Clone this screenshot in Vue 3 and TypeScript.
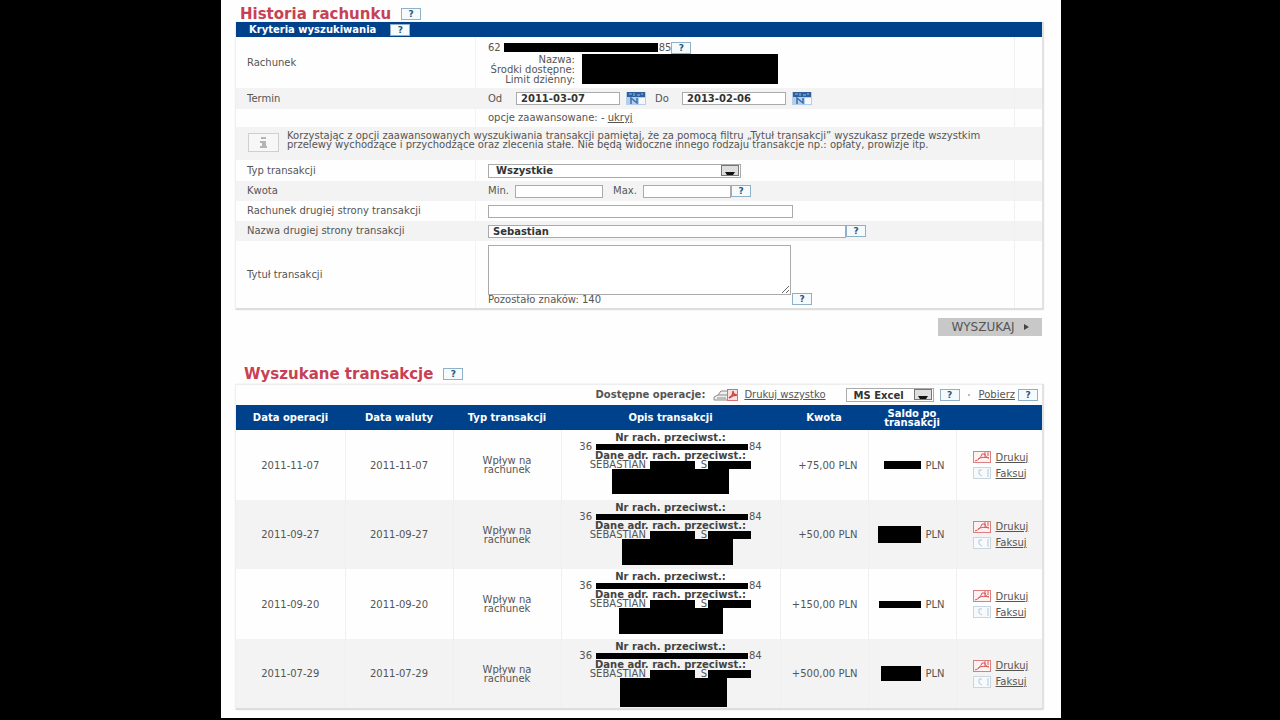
<script setup lang="ts">
import { ref } from 'vue'

interface Size {
  w: number
  h: number
}

interface Transaction {
  posted: string
  value: string
  amount: string
  address: Size & { indent: number }
  balance: Size
}

const from = ref('2011-03-07')
const to = ref('2013-02-06')
const type = ref('Wszystkie')
const min = ref('')
const max = ref('')
const account = ref('')
const name = ref('Sebastian')
const title = ref('')
const format = ref('MS Excel')

const transactions: Transaction[] = [
  { posted: '2011-11-07', value: '2011-11-07', amount: '+75,00 PLN', address: { w: 117, h: 25, indent: 0 }, balance: { w: 37, h: 8 } },
  { posted: '2011-09-27', value: '2011-09-27', amount: '+50,00 PLN', address: { w: 111, h: 26, indent: 14 }, balance: { w: 43, h: 17 } },
  { posted: '2011-09-20', value: '2011-09-20', amount: '+150,00 PLN', address: { w: 104, h: 26, indent: 0 }, balance: { w: 42, h: 7 } },
  { posted: '2011-07-29', value: '2011-07-29', amount: '+500,00 PLN', address: { w: 107, h: 29, indent: 6 }, balance: { w: 40, h: 15 } },
]

const box = (s: Size, indent = 0) => ({
  width: `${s.w}px`,
  height: `${s.h}px`,
  marginLeft: `${indent}px`,
})
</script>

<template>
  <main class="sheet">
    <header class="heading">
      <h1>Historia rachunku</h1>
      <button type="button" class="help" aria-label="Pomoc">?</button>
    </header>

    <form class="panel" @submit.prevent>
      <div class="bar">
        <h2>Kryteria wyszukiwania</h2>
        <button type="button" class="help" aria-label="Pomoc">?</button>
      </div>

      <div class="row account-row">
        <span class="label">Rachunek</span>
        <div class="field account">
          <div class="number">
            <span>62</span><i class="ink number-ink"></i><span>85</span>
            <button type="button" class="help" aria-label="Pomoc">?</button>
          </div>
          <div class="details">
            <div class="detail-labels">
              <span>Nazwa:</span>
              <span>Środki dostępne:</span>
              <span>Limit dzienny:</span>
            </div>
            <i class="ink details-ink"></i>
          </div>
        </div>
        <span class="edge"></span>
      </div>

      <div class="row alt term-row">
        <span class="label">Termin</span>
        <div class="field">
          <label class="lead" for="from">Od</label>
          <input id="from" v-model="from" class="date" type="text" />
          <button type="button" class="calendar" aria-label="Kalendarz">
            <svg width="20" height="13" viewBox="0 0 20 13">
              <rect x="0" y="0" width="20" height="13" fill="#b4cdea" />
              <rect x="1" y="0" width="18" height="5" fill="#2f5f9c" />
              <path d="M3 2h3M8 1v3M11 3h3M16 1v2" stroke="#9dbbdf" stroke-width="1" />
              <rect x="13" y="6" width="6" height="6" fill="#f4f8fc" />
              <path d="M5 12V6l6 5V6" fill="none" stroke="#3a70ad" stroke-width="1.5" />
            </svg>
          </button>
          <label class="lead to" for="to">Do</label>
          <input id="to" v-model="to" class="date" type="text" />
          <button type="button" class="calendar" aria-label="Kalendarz">
            <svg width="20" height="13" viewBox="0 0 20 13">
              <rect x="0" y="0" width="20" height="13" fill="#b4cdea" />
              <rect x="1" y="0" width="18" height="5" fill="#2f5f9c" />
              <path d="M3 2h3M8 1v3M11 3h3M16 1v2" stroke="#9dbbdf" stroke-width="1" />
              <rect x="13" y="6" width="6" height="6" fill="#f4f8fc" />
              <path d="M5 12V6l6 5V6" fill="none" stroke="#3a70ad" stroke-width="1.5" />
            </svg>
          </button>
        </div>
        <span class="edge"></span>
      </div>

      <div class="row advanced-row">
        <span class="label"></span>
        <div class="field">
          <span>opcje zaawansowane: - <a href="#">ukryj</a></span>
        </div>
        <span class="edge"></span>
      </div>

      <div class="note">
        <svg width="31" height="19" viewBox="0 0 31 19">
          <rect x="0.5" y="0.5" width="30" height="18" fill="#f7f7f7" stroke="#cfcfcf" />
          <path d="M13 4h5v2h-5zM12 8h6v5h1v2h-7v-2h2v-3h-2z" fill="#b4b4b4" />
        </svg>
        <p>
          Korzystając z opcji zaawansowanych wyszukiwania transakcji pamiętaj, że za pomocą filtru „Tytuł transakcji” wyszukasz przede wszystkim<br />
          przelewy wychodzące i przychodzące oraz zlecenia stałe. Nie będą widoczne innego rodzaju transakcje np.: opłaty, prowizje itp.
        </p>
      </div>

      <div class="row tall">
        <label class="label" for="type">Typ transakcji</label>
        <div class="field">
          <span class="select type">
            <select id="type" v-model="type">
              <option>Wszystkie</option>
            </select>
            <svg width="18" height="11" viewBox="0 0 18 11">
              <rect x="0.5" y="0.5" width="17" height="10" fill="#dedede" stroke="#777" />
              <path d="M4 7h10l-2 3H6z" fill="#111" />
            </svg>
          </span>
        </div>
        <span class="edge"></span>
      </div>

      <div class="row alt">
        <span class="label">Kwota</span>
        <div class="field">
          <label class="min" for="min">Min.</label>
          <input id="min" v-model="min" class="sum" type="text" />
          <label class="max" for="max">Max.</label>
          <input id="max" v-model="max" class="sum" type="text" />
          <button type="button" class="help" aria-label="Pomoc">?</button>
        </div>
        <span class="edge"></span>
      </div>

      <div class="row">
        <label class="label" for="account">Rachunek drugiej strony transakcji</label>
        <div class="field">
          <input id="account" v-model="account" class="other-account" type="text" />
        </div>
        <span class="edge"></span>
      </div>

      <div class="row alt">
        <label class="label" for="name">Nazwa drugiej strony transakcji</label>
        <div class="field">
          <input id="name" v-model="name" class="other-name" type="text" />
          <button type="button" class="help" aria-label="Pomoc">?</button>
        </div>
        <span class="edge"></span>
      </div>

      <div class="row title-row">
        <label class="label" for="title">Tytuł transakcji</label>
        <div class="field message">
          <div class="message-box">
            <textarea id="title" v-model="title"></textarea>
            <span>Pozostało znaków: 140</span>
          </div>
          <button type="button" class="help" aria-label="Pomoc">?</button>
        </div>
        <span class="edge"></span>
      </div>
    </form>

    <div class="submit">
      <button type="button">
        WYSZUKAJ
        <svg width="5" height="6" viewBox="0 0 5 6"><path d="M0 0l5 3-5 3z" fill="#444" /></svg>
      </button>
    </div>

    <header class="heading results-heading">
      <h1>Wyszukane transakcje</h1>
      <button type="button" class="help" aria-label="Pomoc">?</button>
    </header>

    <section class="panel results">
      <div class="tools">
        <strong>Dostępne operacje:</strong>
        <svg class="printer" width="25" height="13" viewBox="0 0 25 13">
          <path d="M1 11V8l4-2h11v5zM5 6l3-4h7v4M4 9h9" fill="#f0f0f0" stroke="#8a8a8a" />
          <rect x="14.5" y="0.5" width="10" height="11" fill="#f9e0e0" stroke="#d87070" />
          <path d="M16 9c3-1 4-3 4-7 0 3 1 4 4 4-3 0-6 1-8 3" fill="none" stroke="#cc4444" stroke-width="1.5" />
        </svg>
        <a href="#" class="print-all">Drukuj wszystko</a>
        <span class="select format">
          <select v-model="format" aria-label="Format">
            <option>MS Excel</option>
          </select>
          <svg width="18" height="11" viewBox="0 0 18 11">
            <rect x="0.5" y="0.5" width="17" height="10" fill="#dedede" stroke="#777" />
            <path d="M4 7h10l-2 3H6z" fill="#111" />
          </svg>
        </span>
        <button type="button" class="help" aria-label="Pomoc">?</button>
        <i class="dot"></i>
        <a href="#" class="download">Pobierz</a>
        <button type="button" class="help" aria-label="Pomoc">?</button>
      </div>

      <table>
        <colgroup>
          <col class="c-date" /><col class="c-type" /><col class="c-type" /><col />
          <col class="c-sum" /><col class="c-sum" /><col class="c-actions" />
        </colgroup>
        <thead>
          <tr>
            <th>Data operacji</th>
            <th>Data waluty</th>
            <th>Typ transakcji</th>
            <th>Opis transakcji</th>
            <th>Kwota</th>
            <th>Saldo po<br />transakcji</th>
            <th></th>
          </tr>
        </thead>
        <tbody>
          <tr v-for="t in transactions" :key="t.posted">
            <td>{{ t.posted }}</td>
            <td>{{ t.value }}</td>
            <td>Wpływ na<br />rachunek</td>
            <td class="description">
              <div class="lines">
                <b>Nr rach. przeciwst.:</b>
                <span class="line"><span>36</span><i class="ink nr-ink"></i><span>84</span></span>
                <b>Dane adr. rach. przeciwst.:</b>
                <span class="line party">
                  <span>SEBASTIAN</span><i class="ink name-ink"></i><span>S</span><i class="ink name-ink last"></i>
                </span>
                <i class="ink" :style="box(t.address, t.address.indent)"></i>
              </div>
            </td>
            <td class="sum-cell">{{ t.amount }}</td>
            <td class="balance">
              <div><i class="ink" :style="box(t.balance)"></i><span>PLN</span></div>
            </td>
            <td>
              <div class="actions">
                <span>
                  <svg width="18" height="12" viewBox="0 0 18 12">
                    <rect x="0.5" y="0.5" width="17" height="11" fill="#fdf1f1" stroke="#dd7f7f" />
                    <path d="M2 10c4-1 6-4 7-7h3c0 2 1 3 4 4-4-1-8-1-11 1M12 1v5M15 1v4" fill="none" stroke="#d65a5a" />
                  </svg>
                  <a href="#">Drukuj</a>
                </span>
                <span>
                  <svg width="18" height="12" viewBox="0 0 18 12">
                    <rect x="0.5" y="0.5" width="17" height="11" fill="#f6fafc" stroke="#c9d6df" />
                    <path d="M9 3H6v4l3 2M15 2v8" fill="none" stroke="#b3c8d6" />
                  </svg>
                  <a href="#">Faksuj</a>
                </span>
              </div>
            </td>
          </tr>
        </tbody>
      </table>
    </section>
  </main>
</template>

<style>
body {
  margin: 0;
  background: #000;
}
</style>

<style scoped>
.sheet {
  box-sizing: border-box;
  margin: 0 219px 3px 221px;
  padding: 5px 19px 8px 15px;
  background: #fefefe;
  color: #555;
  font: 10px/10px 'DejaVu Sans', Verdana, sans-serif;
}

.sheet * {
  box-sizing: border-box;
}

h1,
h2,
p {
  margin: 0;
}

a {
  color: #555;
  text-decoration: underline;
}

input,
select,
textarea {
  margin: 0;
  padding: 0 4px;
  border: 1px solid #aaa;
  border-radius: 0;
  background: #fff;
  color: #333;
  font: bold 10px/11px 'DejaVu Sans', Verdana, sans-serif;
}

input {
  height: 13px;
}

.ink {
  display: block;
  flex: none;
  background: #000;
}

.help {
  display: block;
  flex: none;
  width: 20px;
  height: 12px;
  padding: 0;
  border: 1px solid #8fb0c6;
  border-radius: 0;
  background: #f5fafd;
  color: #2a557d;
  font: bold 9px/10px 'DejaVu Sans', Verdana, sans-serif;
  text-align: center;
}

.heading {
  display: flex;
  align-items: center;
  gap: 10px;
  height: 17px;
  padding-left: 4px;
}

.heading h1 {
  color: #c84054;
  font-size: 15px;
  line-height: 16px;
}

.results-heading {
  margin-top: 29px;
  padding-left: 8px;
}

.panel {
  border-bottom: 2px solid #ddd;
  box-shadow: 2px 0 1px #e2e2e2, -1px 0 1px #eee;
}

.bar {
  display: flex;
  align-items: center;
  gap: 14px;
  height: 15px;
  padding-left: 13px;
  background: #00418c;
}

.bar h2 {
  color: #fff;
  font-size: 10px;
  line-height: 12px;
}

.row {
  display: grid;
  grid-template-columns: 240px 1fr 28px;
  align-items: stretch;
  min-height: 20px;
}

.alt {
  background: #f3f3f3;
}

.account-row {
  min-height: 51px;
}

.term-row,
.tall {
  min-height: 21px;
}

.advanced-row {
  min-height: 18px;
}

.title-row {
  min-height: 67px;
}

.label {
  display: flex;
  align-items: center;
  padding-left: 11px;
  border-right: 1px solid #f3f3f3;
}

.field {
  display: flex;
  align-items: center;
  padding-left: 12px;
}

.edge {
  border-left: 1px solid #f0f0f0;
}

.account {
  flex-direction: column;
  align-items: flex-start;
  padding-top: 4px;
}

.number {
  display: flex;
  align-items: center;
  height: 13px;
}

.number .number-ink {
  width: 154px;
  height: 9px;
  margin: 0 1px 0 3px;
}

.details {
  display: flex;
  gap: 7px;
}

.detail-labels {
  display: flex;
  flex-direction: column;
  align-items: flex-end;
  width: 87px;
  padding-top: 1px;
  white-space: nowrap;
}

.details-ink {
  width: 196px;
  height: 30px;
}

.lead {
  width: 28px;
}

.to {
  width: 27px;
  margin-left: 9px;
}

.date {
  width: 104px;
}

.calendar {
  margin: 0 0 0 6px;
  padding: 0;
  border: 0;
  background: none;
}

.calendar svg {
  display: block;
}

.note {
  display: flex;
  gap: 8px;
  height: 33px;
  padding: 4px 0 0 12px;
  background: #f3f3f3;
}

.note svg {
  flex: none;
  margin-top: 2px;
}

.note p {
  line-height: 9px;
  white-space: nowrap;
}

.select {
  position: relative;
  display: block;
}

.select select {
  display: block;
  width: 100%;
  height: 14px;
  padding: 0 7px;
  appearance: none;
}

.select svg {
  position: absolute;
  top: 1px;
  right: 2px;
  pointer-events: none;
}

.type {
  width: 253px;
}

.min {
  width: 27px;
}

.max {
  width: 30px;
  margin-left: 10px;
}

.sum {
  width: 88px;
}

.other-account {
  width: 305px;
}

.other-name {
  width: 358px;
}

.message {
  align-items: flex-end;
  gap: 1px;
  padding-bottom: 3px;
}

.message-box {
  display: flex;
  flex-direction: column;
}

.message-box textarea {
  width: 303px;
  height: 50px;
}

.submit {
  display: flex;
  justify-content: flex-end;
  margin-top: 8px;
}

.submit button {
  display: flex;
  align-items: center;
  justify-content: center;
  gap: 9px;
  width: 104px;
  height: 18px;
  padding: 0;
  border: 0;
  background: #c8c8c8;
  color: #555;
  font: 12px/14px 'DejaVu Sans', Verdana, sans-serif;
}

.results {
  margin-top: 2px;
  border-top: 1px solid #eee;
}

.tools {
  display: flex;
  align-items: center;
  justify-content: flex-end;
  height: 20px;
  padding-right: 4px;
  white-space: nowrap;
}

.printer {
  margin: 0 6px 0 8px;
}

.print-all {
  margin-right: 20px;
}

.format {
  width: 88px;
  margin-right: 6px;
}

.dot {
  width: 2px;
  height: 2px;
  margin: 0 9px 0 8px;
  background: #bbb;
}

.download {
  margin-right: 3px;
}

table {
  width: 100%;
  border-collapse: collapse;
  table-layout: fixed;
}

.c-date {
  width: 109px;
}

.c-type {
  width: 108px;
}

.c-sum {
  width: 88px;
}

.c-actions {
  width: 86px;
}

th {
  height: 25px;
  padding: 0;
  background: #00418c;
  color: #fff;
  font-size: 10px;
  line-height: 9px;
}

td {
  height: 69px;
  padding: 0;
  border-left: 1px solid #efefef;
  line-height: 9px;
  text-align: center;
}

td:first-child {
  border-left: 0;
}

tbody tr:nth-child(even) {
  background: #f3f3f3;
}

tbody tr:nth-child(odd) td {
  height: 70px;
}

.description {
  vertical-align: top;
}

.lines {
  display: flex;
  flex-direction: column;
  align-items: center;
  padding-top: 3px;
}

.lines b {
  color: #444;
  font-size: 10px;
}

.line {
  display: flex;
  align-items: center;
  height: 9px;
}

.nr-ink {
  width: 152px;
  height: 6px;
  margin: 0 1px 0 4px;
}

.name-ink {
  width: 45px;
  height: 8px;
  margin: 0 6px 0 4px;
}

.last {
  width: 43px;
  margin: 0 0 0 1px;
}

td.sum-cell {
  padding-right: 10px;
  text-align: right;
}

.balance div {
  display: flex;
  align-items: center;
  justify-content: flex-end;
  gap: 4px;
  padding-right: 11px;
}

.actions {
  display: flex;
  flex-direction: column;
  gap: 4px;
  padding-left: 16px;
}

.actions span {
  display: flex;
  align-items: center;
  gap: 5px;
}
</style>
